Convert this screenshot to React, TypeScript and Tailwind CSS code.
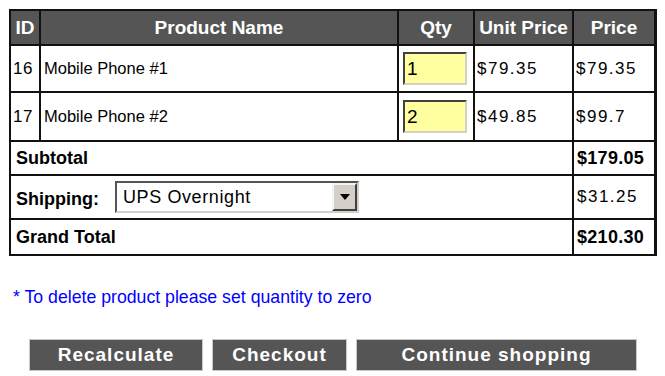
import { useState } from 'react'

const items = [
  { id: 16, name: 'Mobile Phone #1', qty: '1', unit: '$79.35', price: '$79.35' },
  { id: 17, name: 'Mobile Phone #2', qty: '2', unit: '$49.85', price: '$99.7' },
]

export default function App() {
  const [qtys, setQtys] = useState(items.map((i) => i.qty))

  const handleQtyChange = (idx: number, value: string) => {
    const next = [...qtys]
    next[idx] = value
    setQtys(next)
  }

  return (
    <div className="min-h-screen bg-white p-[9px] font-['Liberation_Sans',Arial,sans-serif] text-black">
      <div className="grid w-fit grid-cols-[28px_356px_74px_97px_80px] grid-rows-[33px_45px_47px_32px_42px_34px] gap-[2px] border-t-2 border-b-2 border-l-2 border-r-[3px] border-[#111] bg-[#111]">
        {/* header */}
        <div className="flex items-center justify-center bg-[#555] pt-[2px] text-[19px] font-bold text-white">ID</div>
        <div className="flex items-center justify-center bg-[#555] pt-[2px] text-[19px] font-bold text-white">Product Name</div>
        <div className="flex items-center justify-center bg-[#555] pt-[2px] text-[19px] font-bold text-white">Qty</div>
        <div className="flex items-center justify-center bg-[#555] pt-[2px] text-[19px] font-bold text-white">Unit Price</div>
        <div className="flex items-center justify-center bg-[#555] pt-[2px] text-[19px] font-bold text-white">Price</div>

        {items.map((item, idx) => (
          <div key={item.id} className="contents">
            <div className="flex items-center bg-white pl-[2px] text-[17px] tracking-[0.5px]">{item.id}</div>
            <div className="flex items-center bg-white pl-[3px] text-[16.5px]">{item.name}</div>
            <div className="flex items-center bg-white pl-[4px]">
              <input
                value={qtys[idx]}
                onChange={(e) => handleQtyChange(idx, e.target.value)}
                className="h-[33px] w-[64px] border-2 border-t-[#404040] border-l-[#404040] border-r-[#d4d0c8] border-b-[#d4d0c8] bg-[#ffffa0] pl-[2px] text-[19px] outline-none"
              />
            </div>
            <div className="flex items-center bg-white pl-[2px] text-[17px] tracking-[1.5px]">{item.unit}</div>
            <div className="flex items-center bg-white pl-[2px] text-[17px] tracking-[1.5px]">{item.price}</div>
          </div>
        ))}

        {/* subtotal */}
        <div className="col-span-4 flex items-center bg-white pl-[5px] text-[18px] font-bold">Subtotal</div>
        <div className="flex items-center bg-white pl-[3px] text-[18px] font-bold tracking-[0.3px]">$179.05</div>

        {/* shipping */}
        <div className="col-span-4 flex items-center bg-white pl-[5px]">
          <span className="w-[99px] pt-[4px] text-[18px] font-bold">Shipping:</span>
          <div className="flex h-[32px] w-[244px] border-2 border-t-[#555] border-l-[#555] border-r-[#d4d0c8] border-b-[#d4d0c8] bg-white">
            <span className="flex flex-1 items-center pl-[6px] text-[18px] tracking-[0.6px]">UPS Overnight</span>
            <div className="flex w-[25px] items-center justify-center border-2 border-t-[#f4f4f4] border-l-[#f4f4f4] border-r-[#404040] border-b-[#404040] bg-[#d4d0c8]">
              <svg width="10" height="6" viewBox="0 0 10 6">
                <path d="M0 0 H10 L5 6 Z" fill="#000" />
              </svg>
            </div>
          </div>
        </div>
        <div className="flex items-center bg-white pl-[3px] text-[17px] tracking-[1.5px]">$31.25</div>

        {/* grand total */}
        <div className="col-span-4 flex items-center bg-white pl-[5px] text-[18px] font-bold">Grand Total</div>
        <div className="flex items-center bg-white pl-[3px] text-[18px] font-bold tracking-[0.3px]">$210.30</div>
      </div>

      <p className="mt-[31px] pl-[4px] text-[17.7px] leading-[20px] text-[#0000ff]">* To delete product please set quantity to zero</p>

      <div className="mt-[32px] ml-[20px] flex gap-[9px]">
        <button className="h-[32px] w-[174px] border border-[#c8c8c8] bg-[#555] text-[19px] font-bold tracking-[1px] text-white">Recalculate</button>
        <button className="h-[32px] w-[135px] border border-[#c8c8c8] bg-[#555] text-[19px] font-bold tracking-[1px] text-white">Checkout</button>
        <button className="h-[32px] w-[281px] border border-[#c8c8c8] bg-[#555] text-[19px] font-bold tracking-[1px] text-white">Continue shopping</button>
      </div>
    </div>
  )
}
